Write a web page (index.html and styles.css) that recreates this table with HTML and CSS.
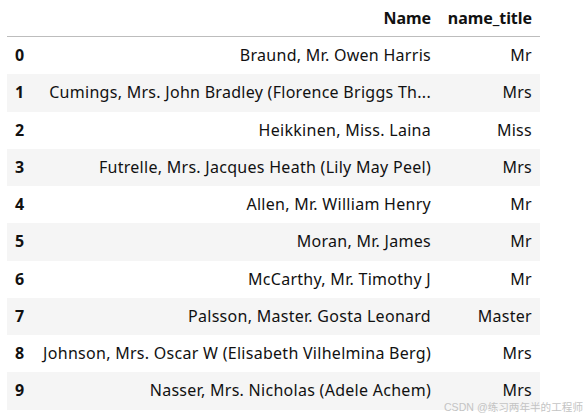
FILE: index.html
```html
<!DOCTYPE html>
<html>
<head>
<meta charset="utf-8">
<link rel="stylesheet" href="styles.css">
</head>
<body>
<div class="frame">
  <table class="dataframe">
    <colgroup>
      <col class="c-idx">
      <col class="c-name">
      <col class="c-title">
    </colgroup>
    <thead>
      <tr><th></th><th>Name</th><th>name_title</th></tr>
    </thead>
    <tbody>
      <tr><th>0</th><td>Braund, Mr. Owen Harris</td><td>Mr</td></tr>
      <tr><th>1</th><td>Cumings, Mrs. John Bradley (Florence Briggs Th...</td><td>Mrs</td></tr>
      <tr><th>2</th><td>Heikkinen, Miss. Laina</td><td>Miss</td></tr>
      <tr><th>3</th><td>Futrelle, Mrs. Jacques Heath (Lily May Peel)</td><td>Mrs</td></tr>
      <tr><th>4</th><td>Allen, Mr. William Henry</td><td>Mr</td></tr>
      <tr><th>5</th><td>Moran, Mr. James</td><td>Mr</td></tr>
      <tr><th>6</th><td>McCarthy, Mr. Timothy J</td><td>Mr</td></tr>
      <tr><th>7</th><td>Palsson, Master. Gosta Leonard</td><td>Master</td></tr>
      <tr><th>8</th><td>Johnson, Mrs. Oscar W (Elisabeth Vilhelmina Berg)</td><td>Mrs</td></tr>
      <tr><th>9</th><td>Nasser, Mrs. Nicholas (Adele Achem)</td><td>Mrs</td></tr>
    </tbody>
  </table>
  <div class="watermark">CSDN @练习两年半的工程师</div>
</div>
</body>
</html>
```
FILE: styles.css
```css
html, body {
  margin: 0;
  padding: 0;
  background: #ffffff;
}

.frame {
  position: relative;
  width: 587px;
  height: 418px;
  padding: 0 0 0 7px;
  box-sizing: border-box;
  overflow: hidden;
}

.dataframe {
  border-collapse: collapse;
  border-spacing: 0;
  table-layout: fixed;
  width: 533px;
  font-family: "Noto Sans", "Open Sans", sans-serif;
  font-size: 16px;
  color: #111111;
}

.c-idx { width: 26px; }
.c-name { width: 406px; }
.c-title { width: 101px; }

.dataframe th,
.dataframe td {
  padding: 8px;
  height: 21.25px;
  line-height: 21.25px;
  white-space: nowrap;
  text-align: right;
  vertical-align: middle;
}

.dataframe td {
  letter-spacing: 0.28px;
  font-weight: 400;
}

.dataframe thead th {
  font-weight: 700;
  height: 20px;
  line-height: 20px;
  border-bottom: 1px solid #bdbdbd;
  letter-spacing: -0.05px;
}

.dataframe tbody th {
  text-align: left;
  font-weight: 700;
}

.dataframe tbody tr:nth-child(even) {
  background: #f5f5f5;
}

.watermark {
  position: absolute;
  right: 4px;
  top: 401px;
  font-family: "Liberation Sans", "Noto Sans CJK SC", sans-serif;
  font-size: 10.6px;
  line-height: 13px;
  color: #c4c4c4;
  white-space: nowrap;
}
```
